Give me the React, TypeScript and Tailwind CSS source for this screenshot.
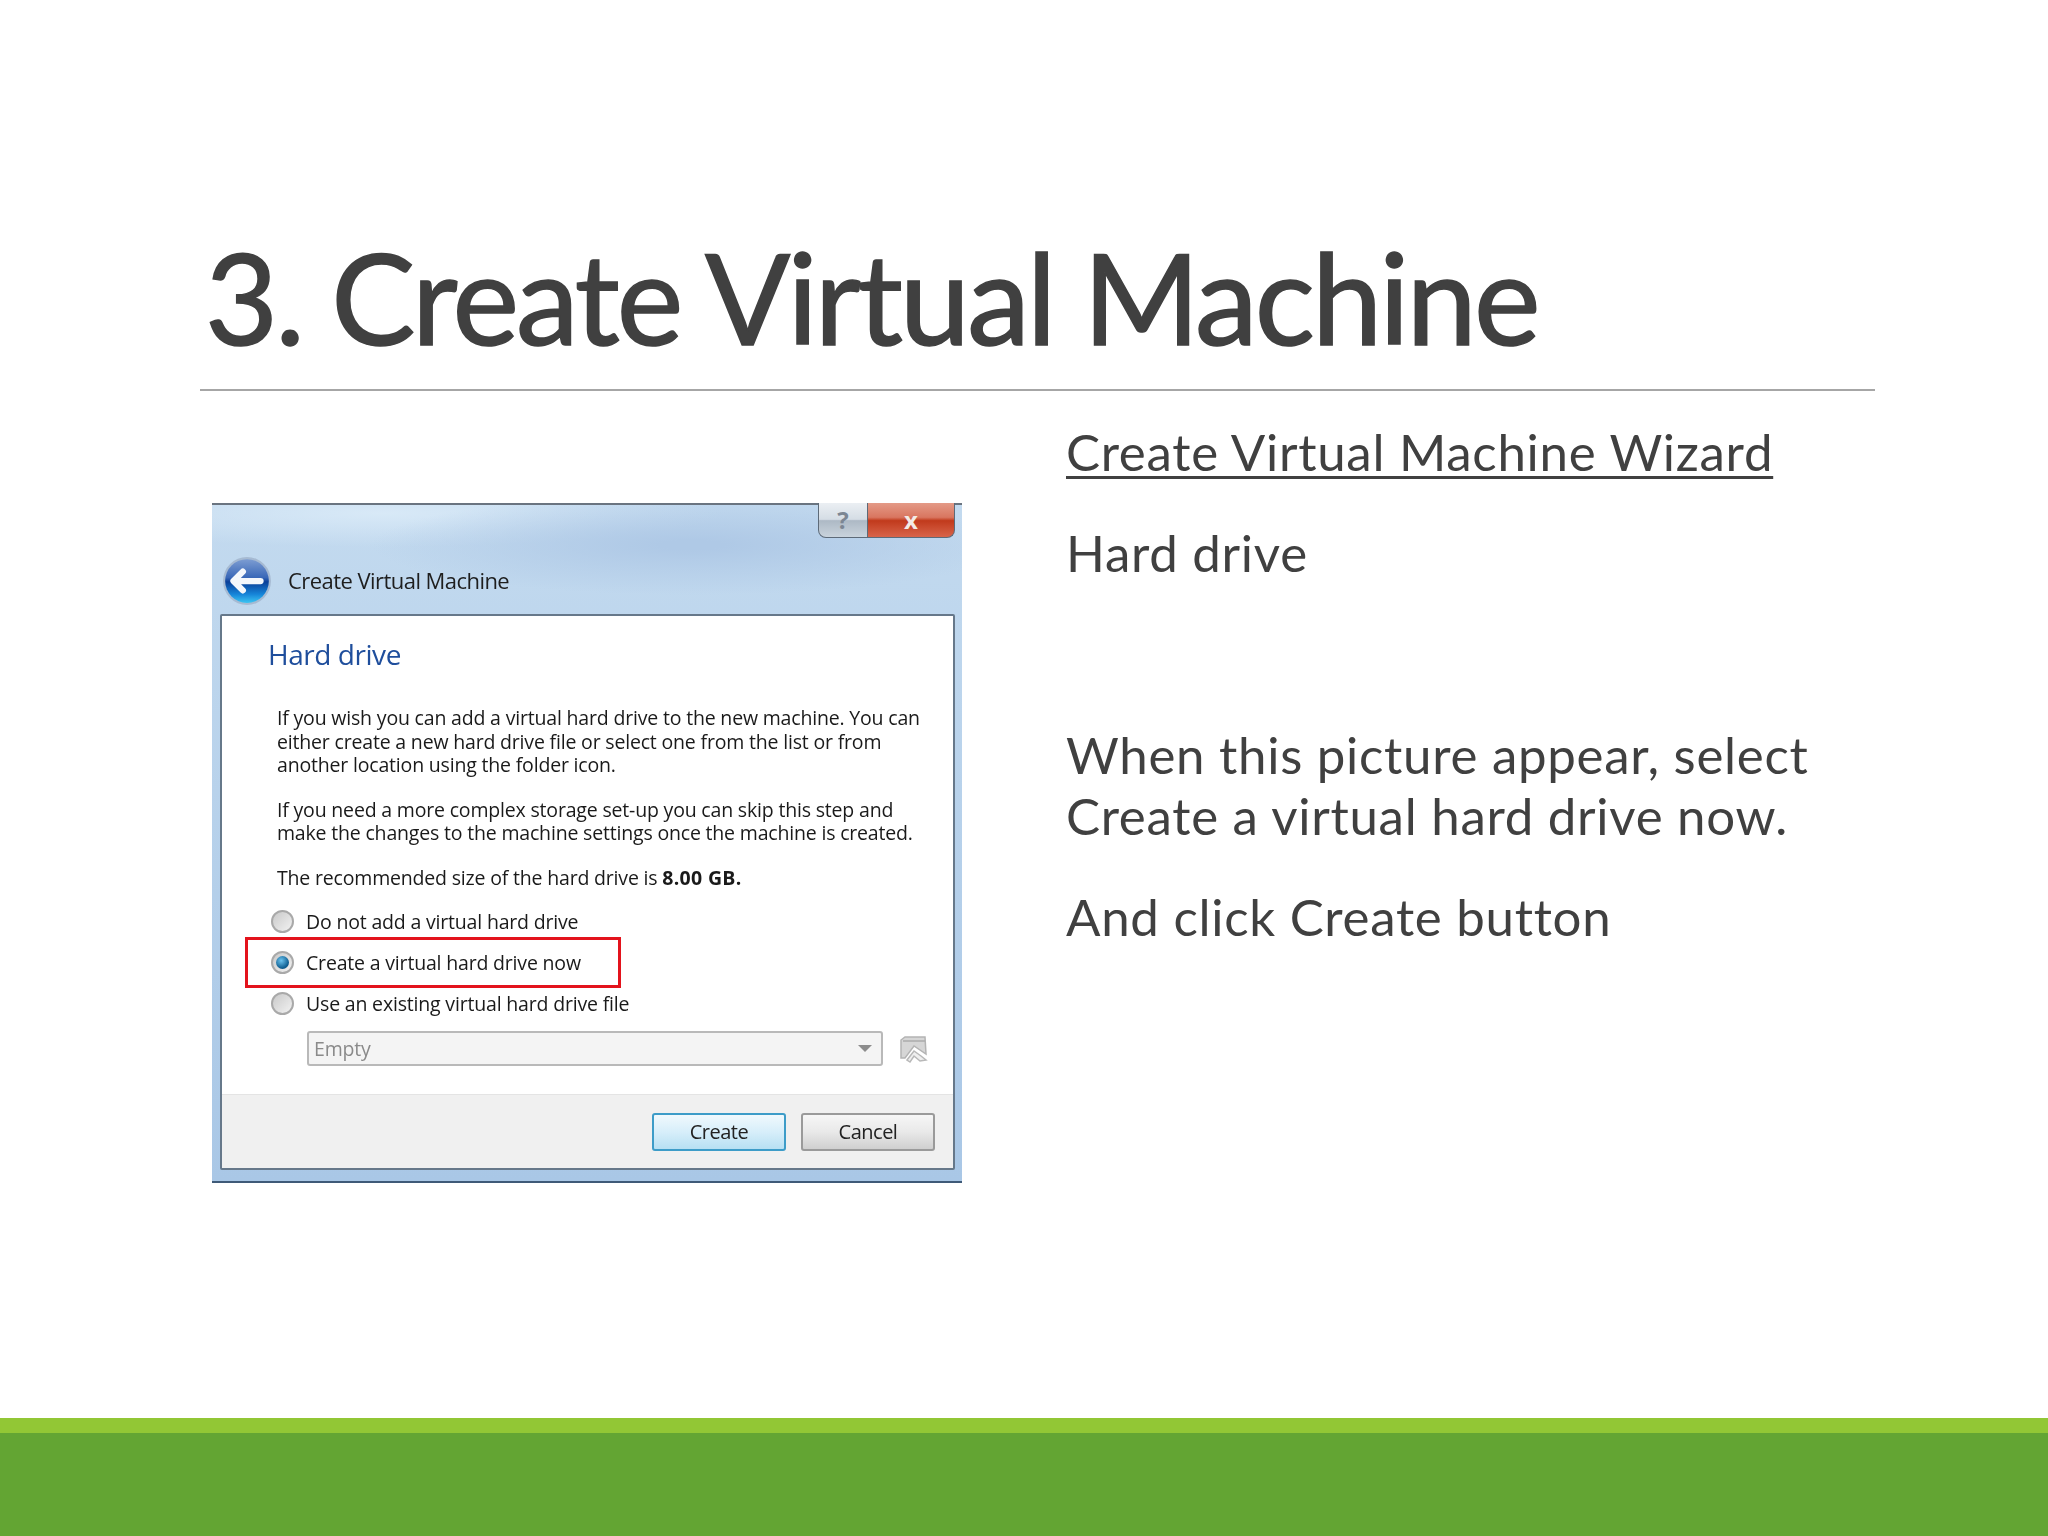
import React from "react"

const bodyFont = "font-['Lato','Liberation_Sans',sans-serif]"
const dialogFont = "font-['Open_Sans','Liberation_Sans',sans-serif]"

function BackIcon() {
  return (
    <svg width="50" height="50" viewBox="0 0 48 48" className="shrink-0">
      <defs>
        <linearGradient id="backFill" x1="0" y1="0" x2="0" y2="1">
          <stop offset="0" stopColor="#7d9dd2" />
          <stop offset="0.42" stopColor="#3a68b8" />
          <stop offset="0.52" stopColor="#0a3f98" />
          <stop offset="0.8" stopColor="#1684d8" />
          <stop offset="1" stopColor="#3cc4f2" />
        </linearGradient>
      </defs>
      <circle cx="24" cy="24" r="23" fill="#a6bad2" />
      <circle cx="24" cy="24" r="21" fill="url(#backFill)" />
      <path d="M20 15 L11 24 L20 33 M12 24 L37 24" fill="none" stroke="#f4f7fb" strokeWidth="6" strokeLinecap="round" strokeLinejoin="round" />
    </svg>
  )
}

function FolderIcon() {
  return (
    <svg width="30" height="30" viewBox="0 0 30 30" className="shrink-0">
      <path d="M2 6 L6 3 L26 3 L27 20 L15 12 L6 24 L2 24 Z" fill="#d6d6d6" stroke="#b4b4b4" strokeWidth="1.5" />
      <path d="M4 7 L26 7" stroke="#ababab" strokeWidth="1.5" fill="none" />
      <path d="M8 26 L15 17 L22 22 L27 26 L21 27 L15 22 L11 28 Z" fill="#efefef" stroke="#b8b8b8" strokeWidth="1.5" />
    </svg>
  )
}

function Radio({ checked, label }: { checked?: boolean; label: string }) {
  return (
    <div className="flex items-center h-[41px]">
      <span className="w-[23px] h-[23px] rounded-full border-2 border-[#a9a9a9] bg-[linear-gradient(135deg,#c9c9c9,#f2f2f2)] flex items-center justify-center shrink-0">
        {checked && (
          <span className="w-[13px] h-[13px] rounded-full bg-[radial-gradient(circle_at_40%_35%,#6cc4ef,#0f5f92_65%,#0b3f68)]" />
        )}
      </span>
      <span className="ml-[12px]">{label}</span>
    </div>
  )
}

function WizardDialog() {
  return (
    <div className={`relative w-[750px] h-[680px] flex flex-col pl-[8px] pr-[7px] pb-[11px] border-t-2 border-t-[#6a7480] border-b-2 border-b-[#3f5a78] ${dialogFont} bg-[radial-gradient(ellipse_320px_50px_at_480px_40px,#afc9e6_10%,transparent_100%),radial-gradient(ellipse_340px_34px_at_170px_8px,#d8e9f7,transparent),linear-gradient(180deg,#c3daef,#a9c7e6)]`}>
      <div className="relative h-[109px] flex items-center shrink-0 pt-[42px] pl-[2px]">
        <BackIcon />
        <span className="ml-[16px] text-[22px] text-[#1e1e1e] tracking-[-0.55px] blur-[0.4px]">Create Virtual Machine</span>
        <div className="absolute top-[-2px] right-[0px] flex h-[35px]">
          <div className="w-[50px] flex items-center justify-center text-[24px] leading-[30px] font-bold text-[#7c8693] rounded-bl-[8px] bg-[linear-gradient(180deg,#ebeff3_0%,#d5dde5_48%,#adb9c5_52%,#c9d3dc_100%)] border border-t-0 border-[#5d6a78]">?</div>
          <div className="w-[87px] flex items-center justify-center text-[24px] leading-[30px] font-bold text-[#f3ebe6] rounded-br-[8px] bg-[linear-gradient(180deg,#e49a87_0%,#d97660_42%,#c13a1c_52%,#d8644a_100%)] border border-t-0 border-l-0 border-[#5d6a78]">x</div>
        </div>
      </div>

      <div className="flex-1 flex flex-col bg-white border-2 border-[#66788a] rounded-[2px]">
        <div className="flex-1 text-[#1a1a1a] text-[19.5px] leading-[23.5px] tracking-[-0.18px] pl-[55px] pr-[10px] blur-[0.4px]">
          <h2 className="ml-[-9px] mt-[20px] text-[28px] leading-[36px] tracking-[-0.45px] text-[#1f4e9c]">Hard drive</h2>
          <p className="mt-[34px]">
            If you wish you can add a virtual hard drive to the new machine. You can<br />
            either create a new hard drive file or select one from the list or from<br />
            another location using the folder icon.
          </p>
          <p className="mt-[21px]">
            If you need a more complex storage set-up you can skip this step and<br />
            make the changes to the machine settings once the machine is created.
          </p>
          <p className="mt-[21px]">The recommended size of the hard drive is <b className="tracking-[0.3px]">8.00 GB.</b></p>
          <div className="mt-[12px] ml-[-6px]">
            <Radio label="Do not add a virtual hard drive" />
            <Radio checked label="Create a virtual hard drive now" />
            <Radio label="Use an existing virtual hard drive file" />
          </div>
          <div className="flex items-center mt-[7px] ml-[30px]">
            <div className="w-[576px] h-[35px] flex items-center justify-between px-[5px] rounded-[3px] border-2 border-[#b9b9b9] bg-[#f4f4f4] text-[#8a8a8a]">
              <span>Empty</span>
              <span className="w-0 h-0 mr-[4px] border-x-[7px] border-x-transparent border-t-[7px] border-t-[#8c8c8c]" />
            </div>
            <div className="ml-[16px]"><FolderIcon /></div>
          </div>
        </div>
        <div className="h-[74px] flex items-center justify-end gap-[15px] pr-[18px] bg-[#f0f0f0] border-t border-[#e4e4e4] text-[#222222] text-[20px] tracking-[-0.5px]">
          <button className="w-[134px] h-[38px] rounded-[3px] border-2 border-[#3d9cc8] bg-[linear-gradient(180deg,#f0f9fd,#d7eefa_50%,#b7e0f3)] blur-[0.4px]">Create</button>
          <button className="w-[134px] h-[38px] rounded-[3px] border-2 border-[#9a9a9a] bg-[linear-gradient(180deg,#f6f6f6,#e9e9e9_50%,#cfcfcf)] blur-[0.4px]">Cancel</button>
        </div>
      </div>

      {/* red highlight drawn over the screenshot */}
      <div className="absolute left-[33px] top-[432px] w-[376px] h-[51px] border-[3px] border-[#e3131c]" />
    </div>
  )
}

export default function App() {
  return (
    <div className={`w-[2048px] h-[1536px] flex flex-col bg-white text-[#404040] ${bodyFont}`}>
      <h1 className="pl-[205px] pt-[222px] h-[389px] text-[126px] leading-[150px] tracking-[-2.95px] font-normal whitespace-nowrap [-webkit-text-stroke:1.5px_#404040]">
        3. Create Virtual Machine
      </h1>
      <div className="ml-[200px] w-[1675px] h-[2px] bg-[#a6a6a6]" />

      <div className="flex-1 flex">
        <div className="ml-[212px] mt-[112px]">
          <WizardDialog />
        </div>
        <div className="ml-[104px] pt-[30px] text-[51px] leading-[61px] tracking-[0.72px] whitespace-nowrap">
          <p className="mb-[40px] underline decoration-[3px] underline-offset-[5px]">Create Virtual Machine Wizard</p>
          <p className="mb-[40px]">Hard drive</p>
          <p className="mb-[40px]">&nbsp;</p>
          <p className="mb-[40px]">
            When this picture appear, select<br />
            Create a virtual hard drive now.
          </p>
          <p>And click Create button</p>
        </div>
      </div>

      <div className="shrink-0">
        <div className="h-[15px] bg-[#92c735]" />
        <div className="h-[103px] bg-[#63a533]" />
      </div>
    </div>
  )
}
